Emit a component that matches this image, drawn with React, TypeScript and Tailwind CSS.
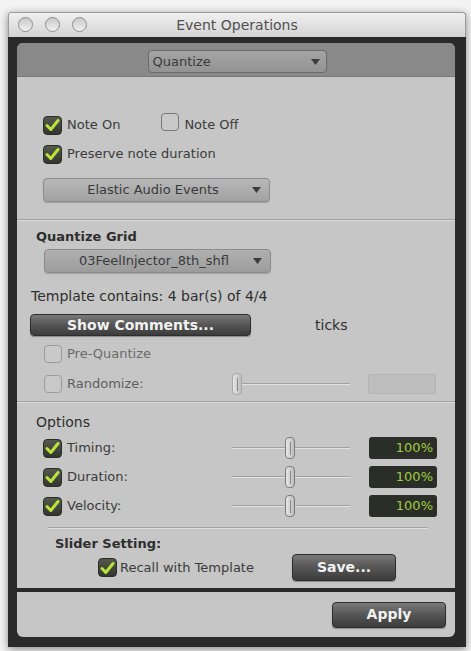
import React from 'react';

const font = { fontFamily: '"DejaVu Sans", "Liberation Sans", sans-serif' };

function Check({ on, dim }: { on?: boolean; dim?: boolean }) {
  if (!on) {
    return (
      <span
        className={
          'inline-block h-[18px] w-[18px] shrink-0 rounded-[4px] border bg-[#c9c9c9] ' +
          (dim ? 'border-[#9a9a9a]' : 'border-[#7a7a7a]')
        }
      />
    );
  }
  return (
    <span className="inline-flex h-[19px] w-[19px] shrink-0 items-center justify-center rounded-[4px] border border-[#2a2c26] bg-gradient-to-b from-[#55594c] to-[#33362e]">
      <svg width="15" height="14" viewBox="0 0 15 14">
        <path d="M2 7.5 L5.8 11.5 L13 2.5" fill="none" stroke="#b9e43a" strokeWidth="3" strokeLinecap="round" strokeLinejoin="round" />
      </svg>
    </span>
  );
}

function Arrow() {
  return (
    <svg width="9" height="6" viewBox="0 0 9 6" className="shrink-0">
      <path d="M0 0 H9 L4.5 6 Z" fill="#3c3c3c" />
    </svg>
  );
}

function Slider({ pos, dim }: { pos: number; dim?: boolean }) {
  return (
    <div className="relative h-[22px] w-[118px]">
      <div className="absolute left-0 right-0 top-[10px] h-[1px] bg-[#a2a2a2]" />
      <div className="absolute left-0 right-0 top-[11px] h-[1px] bg-[#e2e2e2]" />
      <div
        className={
          'absolute top-0 flex h-[22px] w-[10px] justify-center rounded-[4px] border bg-gradient-to-r from-[#e6e6e6] to-[#bdbdbd] ' +
          (dim ? 'border-[#a8a8a8]' : 'border-[#7c7c7c]')
        }
        style={{ left: pos }}
      >
        <span className="mt-[4px] h-[13px] w-[1px] bg-[#8a8a8a]" />
      </div>
    </div>
  );
}

function Value({ text }: { text?: string }) {
  if (!text) {
    return <div className="h-[20px] w-[68px] rounded-[3px] border border-[#b4b4b4] bg-[#bdbdbd]" />;
  }
  return (
    <div className="flex h-[22px] w-[68px] items-center justify-end rounded-[3px] bg-[#2b2d29] pr-[4px] text-[13px] text-[#9fcf3c]">
      {text}
    </div>
  );
}

function DarkButton({ label, w, h }: { label: string; w: string; h: string }) {
  return (
    <div
      className={
        w +
        ' ' +
        h +
        ' flex items-center justify-center rounded-[4px] border border-[#2e2e2e] bg-gradient-to-b from-[#7a7a7a] via-[#555555] to-[#3c3c3c] text-[14px] font-bold text-[#f2f2f2] shadow-[0_1px_1px_rgba(0,0,0,0.3)]'
      }
    >
      {label}
    </div>
  );
}

export default function App() {
  return (
    <div className="h-[651px] w-[471px] overflow-hidden bg-[#f3f3f3] pl-[8px] pt-[12px] text-[#3b3b3b]" style={font}>
      <div className="w-[458px] shadow-[0_2px_8px_rgba(0,0,0,0.45)]">
        {/* title bar */}
        <div className="relative flex h-[25px] items-center justify-center rounded-t-[3px] border border-b-0 border-[#9c9c9c] bg-gradient-to-b from-[#f0f0f0] to-[#d4d4d4]">
          <div className="absolute left-[9px] top-[4px] flex gap-[12px]">
            {[0, 1, 2].map((i) => (
              <span key={i} className="h-[15px] w-[15px] rounded-full border border-[#8e8e8e] bg-gradient-to-b from-[#c8c8c8] to-[#f2f2f2]" />
            ))}
          </div>
          <span className="text-[14px] text-[#505050]">Event Operations</span>
        </div>

        {/* dark frame */}
        <div className="bg-[#2a2a2a] pb-[10px] pl-[9px] pr-[11px] pt-[6px]">
          <div className="flex h-[545px] flex-col rounded-t-[6px] bg-[#c6c6c6]">
            <div className="flex h-[34px] shrink-0 justify-center rounded-t-[6px] border-b border-[#7a7a7a] bg-[#898989] pt-[7px]">
              <div className="ml-[2px] flex h-[23px] w-[179px] items-center justify-between rounded-[4px] border border-[#6a6a6a] bg-gradient-to-b from-[#a4a4a4] to-[#939393] pl-[4px] pr-[6px] text-[13px] text-[#3a3a3a]">
                <span>Quantize</span>
                <Arrow />
              </div>
            </div>

            {/* section 1 */}
            <div className="flex h-[143px] shrink-0 flex-col border-b border-[#a0a0a0] pl-[26px]">
              <div className="mt-[39px] flex h-[18px] items-center text-[13px]">
                <Check on />
                <span className="ml-[5px]">Note On</span>
                <span className="ml-[41px]">
                  <Check />
                </span>
                <span className="ml-[5px]">Note Off</span>
              </div>
              <div className="mt-[11px] flex h-[18px] items-center text-[13px]">
                <Check on />
                <span className="ml-[5px]">Preserve note duration</span>
              </div>
              <div className="mt-[15px] flex h-[24px] w-[227px] items-center justify-between rounded-[4px] border border-[#8c8c8c] bg-gradient-to-b from-[#b8b8b8] to-[#a2a2a2] pl-[10px] pr-[8px] text-[13px] text-[#3a3a3a] shadow-[0_1px_1px_rgba(0,0,0,0.2)]">
                <span className="flex-1 text-center">Elastic Audio Events</span>
                <Arrow />
              </div>
            </div>

            {/* section 2 */}
            <div className="flex h-[182px] shrink-0 flex-col border-t border-[#dadada] border-b border-b-[#a0a0a0]">
              <div className="ml-[19px] mt-[7px] flex h-[18px] items-center text-[13px] font-bold text-[#2e2e2e]">Quantize Grid</div>
              <div className="ml-[27px] mt-[3px] flex h-[24px] w-[227px] items-center justify-between rounded-[4px] border border-[#8c8c8c] bg-gradient-to-b from-[#b0b0b0] to-[#9c9c9c] pl-[10px] pr-[8px] text-[13px] text-[#3a3a3a] shadow-[0_1px_1px_rgba(0,0,0,0.2)]">
                <span className="flex-1 text-center">03FeelInjector_8th_shfl</span>
                <Arrow />
              </div>
              <div className="ml-[14px] mt-[13px] flex h-[20px] items-center text-[14px] text-[#2e2e2e]">Template contains: 4 bar(s) of 4/4</div>
              <div className="ml-[13px] mt-[8px] flex items-center">
                <DarkButton label="Show Comments..." w="w-[221px]" h="h-[22px]" />
                <span className="ml-[64px] text-[14px] text-[#2e2e2e]">ticks</span>
              </div>
              <div className="ml-[27px] mt-[9px] flex h-[18px] items-center text-[13px] text-[#6a6a6a]">
                <Check dim />
                <span className="ml-[5px]">Pre-Quantize</span>
              </div>
              <div className="ml-[27px] mt-[11px] flex h-[20px] items-center text-[13px] text-[#5e5e5e]">
                <Check dim />
                <span className="ml-[5px] w-[165px]">Randomize:</span>
                <Slider pos={0} dim />
                <span className="ml-[18px]">
                  <Value />
                </span>
              </div>
            </div>

            {/* section 3 */}
            <div className="flex flex-col border-t border-[#dadada]">
              <div className="ml-[19px] mt-[10px] flex h-[18px] items-center text-[14px] text-[#2e2e2e]">Options</div>
              {['Timing:', 'Duration:', 'Velocity:'].map((l, i) => (
                <div key={l} className={'ml-[26px] flex h-[22px] items-center text-[13px] ' + (i === 0 ? 'mt-[6px]' : 'mt-[7px]')}>
                  <Check on />
                  <span className="ml-[5px] w-[165px]">{l}</span>
                  <Slider pos={53} />
                  <span className="ml-[19px]">
                    <Value text="100%" />
                  </span>
                </div>
              ))}
              <div className="ml-[31px] mt-[10px] h-[2px] w-[380px] border-t border-[#a2a2a2] border-b border-b-[#dedede]" />
              <div className="ml-[38px] mt-[6px] flex h-[18px] items-center text-[13px] font-semibold text-[#2e2e2e]">Slider Setting:</div>
              <div className="ml-[81px] mt-[1px] flex h-[27px] items-center text-[13px]">
                <Check on />
                <span className="ml-[3px] w-[172px]">Recall with Template</span>
                <DarkButton label="Save..." w="w-[104px]" h="h-[27px]" />
              </div>
            </div>
          </div>

          {/* bottom panel */}
          <div className="mt-[4px] flex h-[45px] items-center justify-end rounded-b-[6px] bg-[#c6c6c6] pr-[9px]">
            <DarkButton label="Apply" w="w-[114px]" h="h-[26px]" />
          </div>
        </div>
      </div>
    </div>
  );
}
